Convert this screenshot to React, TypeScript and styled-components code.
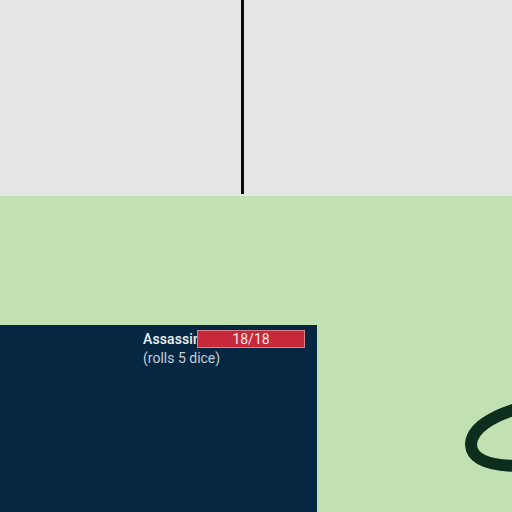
import React from 'react'
import styled, { createGlobalStyle } from 'styled-components'

const GlobalStyle = createGlobalStyle`
  html, body {
    margin: 0;
    padding: 0;
    height: 100%;
    overflow: hidden;
  }
  #root {
    height: 100%;
  }
`

const Page = styled.div`
  display: flex;
  flex-direction: column;
  height: 512px;
  width: 512px;
  overflow: hidden;
  font-family: Roboto, 'Liberation Sans', sans-serif;
`

const Sky = styled.div`
  height: 196px;
  background-color: rgb(229, 229, 229);
  padding-left: 241px;
  box-sizing: border-box;
`

const Pole = styled.div`
  width: 3px;
  height: 194px;
  background-color: rgb(10, 10, 10);
`

const Field = styled.div`
  position: relative;
  flex: 1;
  background-color: rgb(193, 225, 178);
  display: flex;
  flex-direction: column;
  padding-top: 129px;
`

const UnitCard = styled.div`
  width: 317px;
  flex: 1;
  background-color: rgb(5, 39, 66);
  padding: 5px 0 0 143px;
  box-sizing: border-box;
  color: rgb(240, 243, 246);
`

const TitleRow = styled.div`
  display: flex;
  align-items: center;
  height: 18px;
`

const UnitName = styled.span`
  width: 54px;
  overflow: hidden;
  white-space: nowrap;
  font-size: 14px;
  font-weight: 500;
  letter-spacing: 0.1px;
`

const HealthBar = styled.div`
  width: 108px;
  height: 18px;
  box-sizing: border-box;
  border: 1px solid rgb(214, 128, 136);
  background-color: rgb(199, 41, 58);
  display: flex;
  align-items: center;
  justify-content: center;
  font-size: 14px;
  color: rgb(245, 232, 234);
`

const DiceNote = styled.div`
  margin-top: 2px;
  font-size: 14px;
  color: rgb(200, 205, 212);
`

const Scribble = styled.svg`
  position: absolute;
  left: 450px;
  top: 200px;
  width: 62px;
  height: 90px;
  overflow: visible;
`

const App: React.FC = () => (
  <>
    <GlobalStyle />
    <Page>
      <Sky>
        <Pole />
      </Sky>
      <Field>
        <UnitCard>
          <TitleRow>
            <UnitName>Assassin</UnitName>
            <HealthBar>18/18</HealthBar>
          </TitleRow>
          <DiceNote>(rolls 5 dice)</DiceNote>
        </UnitCard>
        <Scribble viewBox="450 396 62 90">
          <path
            d="M 520 408 C 494 415, 471 428, 471 445 C 472 461, 492 466, 520 466"
            fill="none"
            stroke="rgb(13, 46, 28)"
            strokeWidth="12"
            strokeLinecap="round"
          />
        </Scribble>
      </Field>
    </Page>
  </>
)

export default App
